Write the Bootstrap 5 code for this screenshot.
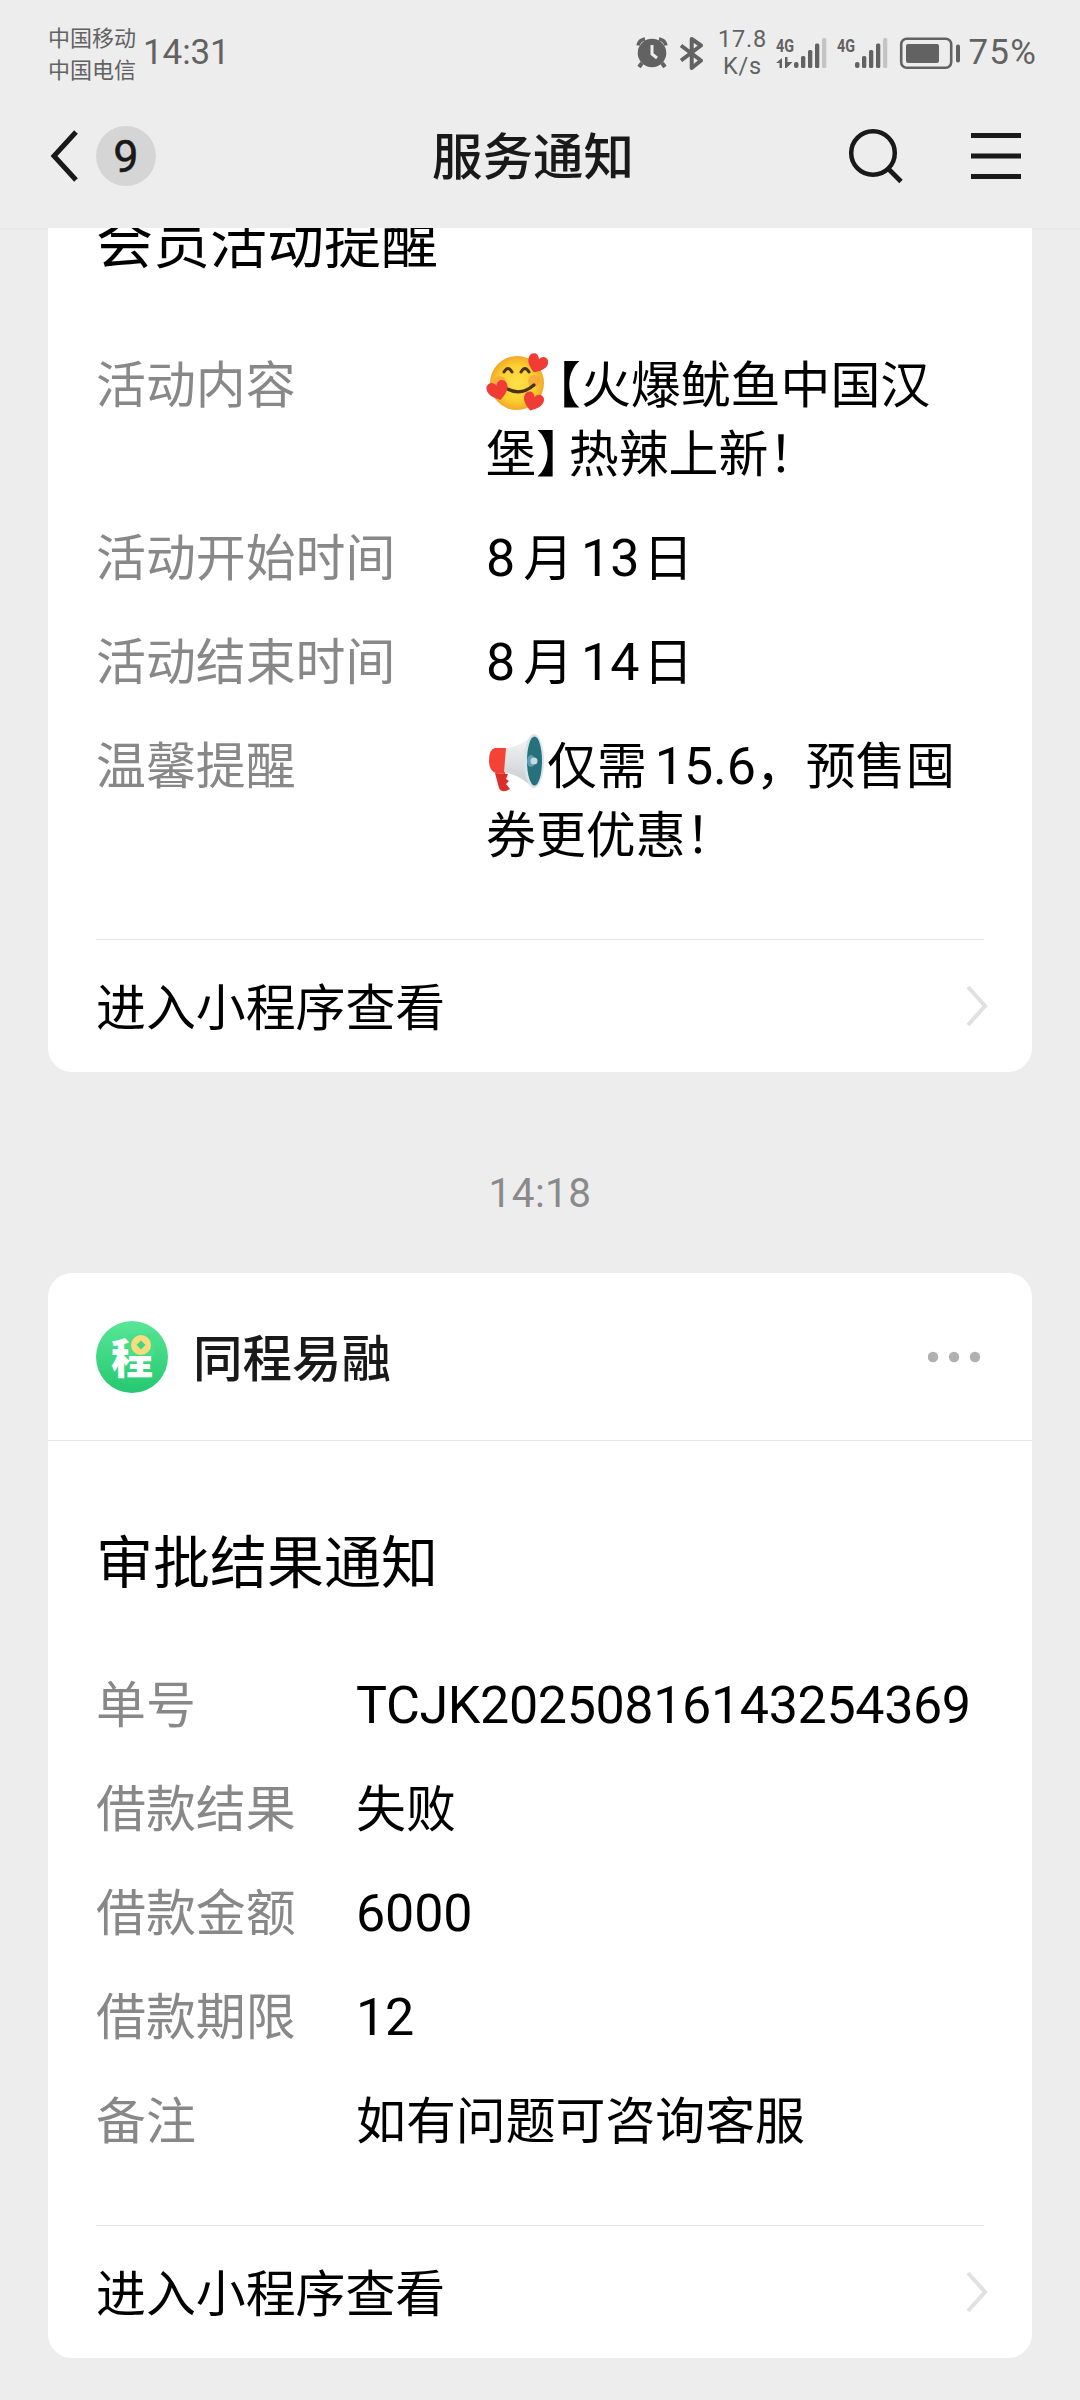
<!DOCTYPE html>
<html lang="zh-CN">
<head>
<meta charset="utf-8">
<meta name="viewport" content="width=device-width, initial-scale=1">
<title>服务通知</title>
<link href="https://cdn.jsdelivr.net/npm/bootstrap@5.3.0/dist/css/bootstrap.min.css" rel="stylesheet">
<style>
body{background:#ededed;color:#000;font-family:"Noto Sans CJK SC",sans-serif;font-size:49.9px;line-height:69px;width:1080px;height:2400px;overflow:hidden}
svg{display:block;flex:none}
.num{font-family:Roboto,"Noto Sans CJK SC",sans-serif;font-size:52px;line-height:1;letter-spacing:-.1px}
.num-long{letter-spacing:-.36px}
.status-bar{height:105px;color:#626262;padding:0 43px 0 48px}
.carrier{font-size:22px;line-height:32px;width:95px;margin-top:-2px}
.clock,.percent{font-family:Roboto,sans-serif;font-size:35px;line-height:40px}
.clock{letter-spacing:-.1px}
.percent{letter-spacing:1.2px;margin-left:8px}
.speed{font-family:Roboto,sans-serif;font-size:23.5px;line-height:27px;width:50px;letter-spacing:.8px;margin:0 9px 0 12px}
.title-bar{height:123px;color:#191919;padding:0 58px 0 50px}
.title-bar .page-name{font-size:50.5px;font-weight:500;padding-right:6px;margin-top:-26px}
.side{width:190px;margin-top:-21px}
.unread{width:60px;height:60px;background:#d5d5d5;font-family:Roboto,sans-serif;font-size:45px;font-weight:400;-webkit-text-stroke:.5px #191919;margin-left:18px}
.feed{height:2172px;padding:0 48px}
.hairline{height:2px;background:#e8e8e8;margin:0 -48px}
.notice{background:#fff;border:0;border-radius:24px;color:#000}
.notice-first{margin-top:-32px;border-radius:0 0 24px 24px}
.notice-title{font-size:57px;line-height:80px;padding-left:48px;margin:0;font-weight:400}
.notice-second .notice-title{padding-top:77px}
.fields{padding:71px 0 71px 48px;gap:35px}
.field-label{color:#888;flex:none;width:390px}
.notice-second .field-label{width:260px}
.field-row{white-space:nowrap}
.field-row>div{margin-top:-2px;margin-bottom:2px}
.notice-foot{margin:0 48px;border-top:1px solid #e5e5e5;height:133px}
.notice-foot span{margin-top:-4px}
.notice-foot svg{margin-right:-4px}
.notice-head{height:168px;border-bottom:1px solid #e5e5e5;padding:0 48px}
.sender{font-weight:500;color:#191919;margin-left:25px;margin-top:-3px;font-size:49.5px}
.stamp{height:201px;font-family:Roboto,sans-serif;font-size:40.5px;line-height:40px;color:#8a8a8a;padding-top:101px;letter-spacing:.4px}
.emoji{display:inline-block;vertical-align:-9px}
.half{font-feature-settings:"halt"}
</style>
<script src="https://cdn.jsdelivr.net/npm/bootstrap@5.3.0/dist/js/bootstrap.bundle.min.js"></script>
</head>
<body>
<header>
  <div class="status-bar d-flex align-items-center">
    <div class="carrier"><div>中国移动</div><div>中国电信</div></div>
    <div class="clock">14:31</div>
    <div class="ms-auto d-flex align-items-center">
      <svg width="70" height="36" viewBox="636 34 70 36" fill="none" stroke="#626262">
        <circle cx="653" cy="52" r="14.3" fill="#626262" stroke="none"/>
        <path d="M639 44.500Q640 39 646 38M667 44.500Q666 39 660 38" stroke-width="3.500"/>
        <path d="M643 62l-3 4M663 62l3 4" stroke-width="4"/>
        <path d="M653 44v9l5 4" stroke="#ededed" stroke-width="3"/>
        <path d="M682 44.500l20 15-9.300 7.500V38l9.300 6.500-20 15" stroke-width="4" stroke-linejoin="round"/>
      </svg>
      <div class="speed text-center"><div>17.8</div><div>K/s</div></div>
      <svg width="184" height="36" viewBox="776 34 184 36" fill="#626262">
        <g font-family="Roboto,sans-serif" font-size="19" font-weight="700"><text x="776" y="51" textLength="18" lengthAdjust="spacingAndGlyphs">4G</text><text x="837" y="51" textLength="18" lengthAdjust="spacingAndGlyphs">4G</text></g>
        <path d="M776 62l6-5v10h-2.500v-5zM785 56h2.500v5h5l-6 6h-1.500z"/>
        <g id="bars"><rect x="794" y="61" width="4.500" height="6" rx="2"/><rect x="801" y="55" width="4.300" height="12" rx="1.500"/><rect x="808" y="49" width="4.300" height="18" rx="1.500"/><rect x="815" y="42.500" width="4.300" height="24.500" rx="1.500"/><rect x="822" y="37" width="4.300" height="30" rx="1.500" fill="#c4c4c4"/></g>
        <use href="#bars" x="61"/>
        <rect x="901.200" y="37.700" width="50" height="29" rx="5.500" fill="none" stroke="#626262" stroke-width="2.600"/>
        <rect x="906" y="43" width="33" height="19" rx="2"/><rect x="956" y="43.500" width="4" height="18" rx="1.800"/>
      </svg>
      <div class="percent">75%</div>
    </div>
  </div>
  <nav class="title-bar d-flex align-items-center justify-content-between">
    <div class="side d-flex align-items-center">
      <svg width="28" height="52" viewBox="50 130 28 52" fill="none" stroke="#191919" stroke-width="5"><path d="M76 132L54 156l22 24"/></svg>
      <span class="unread rounded-circle d-flex align-items-center justify-content-center">9</span>
    </div>
    <div class="page-name">服务通知</div>
    <div class="side d-flex align-items-center justify-content-end">
      <svg width="174" height="56" viewBox="848 128 174 56" fill="none" stroke="#191919"><circle cx="873" cy="153" r="21.800" stroke-width="4.500"/><path d="M888.500 169l12.500 12.500" stroke-width="4.800"/><path d="M971 135.500h50M971 156h50M971 176.500h50" stroke-width="5"/></svg>
    </div>
  </nav>
</header>

<main class="feed overflow-hidden">
  <div class="hairline"></div>
  <section class="card notice notice-first">
    <h2 class="notice-title">会员活动提醒</h2>
    <div class="fields d-flex flex-column">
      <div class="field-row d-flex"><div class="field-label">活动内容</div>
        <div><svg class="emoji" width="62" height="60" viewBox="0 0 62 60">
          <defs><radialGradient id="face"><stop offset="0" stop-color="#ffe04a"/><stop offset=".65" stop-color="#fcd031"/><stop offset="1" stop-color="#f2a928"/></radialGradient>
          <path id="heart" d="M0 9C-6 5-11 1-10-5-9-10-2-11 0-5 2-11 9-10 10-5 11 1 6 5 0 9z"/></defs>
          <circle cx="31" cy="31" r="27" fill="url(#face)"/>
          <circle cx="14" cy="30" r="6" fill="#f59a45" opacity=".6"/><circle cx="48" cy="29" r="6" fill="#f59a45" opacity=".6"/>
          <path d="M18 20q4-7 8 0M35 20q4-7 8 0" fill="none" stroke="#4b3312" stroke-width="3" stroke-linecap="round"/>
          <path d="M20 36q14 9 28-3" fill="none" stroke="#4b3312" stroke-width="3.200" stroke-linecap="round"/>
          <g fill="#f03c35"><use href="#heart" transform="translate(51 12) rotate(22)"/><use href="#heart" transform="translate(12 39) rotate(-16) scale(1.050)"/><use href="#heart" transform="translate(47 50) rotate(18)"/></g>
        </svg><span class="half ms-2">【</span>火爆鱿鱼中国汉<br>堡<span class="half me-2">】</span>热辣上新！</div></div>
      <div class="field-row d-flex"><div class="field-label">活动开始时间</div><div><span class="num">8</span><span class="mx-2">月</span><span class="num">13</span><span class="ms-1">日</span></div></div>
      <div class="field-row d-flex"><div class="field-label">活动结束时间</div><div><span class="num">8</span><span class="mx-2">月</span><span class="num">14</span><span class="ms-1">日</span></div></div>
      <div class="field-row d-flex"><div class="field-label">温馨提醒</div>
        <div><svg class="emoji" width="61" height="60" viewBox="0 0 61 60">
          <defs><linearGradient id="horn" x2="0" y2="1"><stop offset="0" stop-color="#f7f7f7"/><stop offset="1" stop-color="#c6cacc"/></linearGradient></defs>
          <path d="M9 40l13 1-2 5 3 2-3 3 4 5q-8 5-11-1z" fill="#d92f28"/>
          <path d="M9 15h13l-3 26-9-1Q3 38 3 28q0-12 6-13z" fill="#f44336"/>
          <path d="M20 15q14-1 27-13v53Q36 43 18 39z" fill="url(#horn)"/>
          <ellipse cx="48" cy="28" rx="10" ry="27" fill="#dbe4e8"/><ellipse cx="48.500" cy="28" rx="7.500" ry="24.500" fill="#25717c"/>
          <ellipse cx="45" cy="28" rx="4" ry="6" fill="#5e9fb5"/><circle cx="48" cy="28" r="3.500" fill="#c8d9df"/>
        </svg>仅需<span class="num ms-2">15.6</span>，预售囤<br>券更优惠！</div></div>
    </div>
    <div class="notice-foot d-flex align-items-center justify-content-between"><span>进入小程序查看</span>
      <svg width="22" height="42" viewBox="0 0 22 42" fill="none" stroke="#e1e1e1" stroke-width="4"><path d="M2 2l17 19L2 40"/></svg></div>
  </section>

  <div class="stamp text-center">14:18</div>

  <section class="card notice notice-second">
    <div class="notice-head d-flex align-items-center">
      <svg width="72" height="72" viewBox="0 0 72 72"><defs><linearGradient id="mint" x2="0" y2="1"><stop offset="0" stop-color="#58e697"/><stop offset="1" stop-color="#25c870"/></linearGradient></defs>
        <circle cx="36" cy="36" r="36" fill="url(#mint)"/>
        <text x="15" y="52.500" font-size="42" font-weight="900" fill="#fff" font-family="Noto Sans CJK SC,sans-serif">程</text>
        <rect x="33" y="13" width="25" height="21.500" fill="#49de8b"/><circle cx="45" cy="24" r="10" fill="#fbdc7c"/><path d="M45 19.500l4.500 4.500-4.500 4.500-4.500-4.500z" fill="#42d586"/></svg>
      <span class="sender">同程易融</span>
      <svg class="ms-auto" width="56" height="12" viewBox="0 0 56 12" fill="#b0b0b0"><circle cx="5" cy="6" r="5.200"/><circle cx="26" cy="6" r="5.200"/><circle cx="47" cy="6" r="5.200"/></svg>
    </div>
    <h2 class="notice-title">审批结果通知</h2>
    <div class="fields d-flex flex-column">
      <div class="field-row d-flex"><div class="field-label">单号</div><div><span class="num num-long">TCJK20250816143254369</span></div></div>
      <div class="field-row d-flex"><div class="field-label">借款结果</div><div>失败</div></div>
      <div class="field-row d-flex"><div class="field-label">借款金额</div><div><span class="num">6000</span></div></div>
      <div class="field-row d-flex"><div class="field-label">借款期限</div><div><span class="num">12</span></div></div>
      <div class="field-row d-flex"><div class="field-label">备注</div><div>如有问题可咨询客服</div></div>
    </div>
    <div class="notice-foot d-flex align-items-center justify-content-between"><span>进入小程序查看</span>
      <svg width="22" height="42" viewBox="0 0 22 42" fill="none" stroke="#e1e1e1" stroke-width="4"><path d="M2 2l17 19L2 40"/></svg></div>
  </section>
</main>
</body>
</html>
